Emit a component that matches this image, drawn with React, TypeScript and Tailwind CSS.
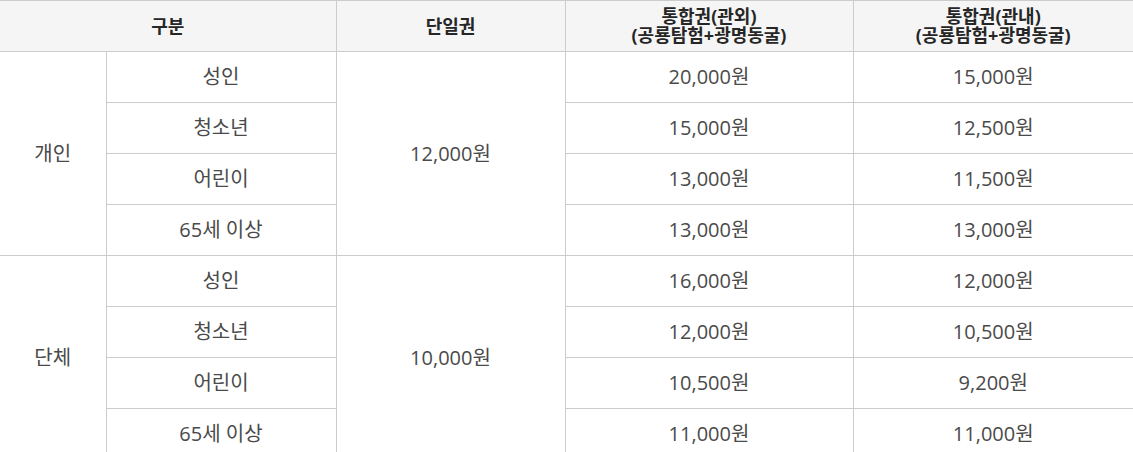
const groups = [
  {
    name: "개인",
    single: "12,000원",
    rows: [
      ["성인", "20,000원", "15,000원"],
      ["청소년", "15,000원", "12,500원"],
      ["어린이", "13,000원", "11,500원"],
      ["65세 이상", "13,000원", "13,000원"],
    ],
  },
  {
    name: "단체",
    single: "10,000원",
    rows: [
      ["성인", "16,000원", "12,000원"],
      ["청소년", "12,000원", "10,500원"],
      ["어린이", "10,500원", "9,200원"],
      ["65세 이상", "11,000원", "11,000원"],
    ],
  },
];

const cell = "border-b border-r border-[#cccccc] text-center align-middle h-[51px] p-0";

export default function App() {
  return (
    <div
      className="w-[1133px] h-[452px] overflow-hidden bg-white"
      style={{ fontFamily: '"Open Sans", "Noto Sans CJK KR", sans-serif' }}
    >
      <table className="w-[1133px] table-fixed border-collapse border-t border-[#cccccc] text-[20px] text-[#4a4a4a]">
        <colgroup>
          <col className="w-[106px]" />
          <col className="w-[230px]" />
          <col className="w-[229px]" />
          <col className="w-[288px]" />
          <col className="w-[280px]" />
        </colgroup>
        <thead>
          <tr className="bg-[#f5f5f5] text-[#262626] text-[18px] leading-[19px]">
            <th colSpan={2} className={`${cell} font-bold`}>구분</th>
            <th className={`${cell} font-bold`}>단일권</th>
            <th className={`${cell} font-bold`}>
              <div>통합권(관외)</div>
              <div>(공룡탐험+광명동굴)</div>
            </th>
            <th className={`${cell} font-bold border-r-0`}>
              <div>통합권(관내)</div>
              <div>(공룡탐험+광명동굴)</div>
            </th>
          </tr>
        </thead>
        <tbody>
          {groups.map((g) =>
            g.rows.map((r, i) => (
              <tr key={g.name + i}>
                {i === 0 && (
                  <td rowSpan={4} className={cell}>
                    {g.name}
                  </td>
                )}
                <td className={cell}>{r[0]}</td>
                {i === 0 && (
                  <td rowSpan={4} className={cell}>
                    {g.single}
                  </td>
                )}
                <td className={cell}>{r[1]}</td>
                <td className={`${cell} border-r-0`}>{r[2]}</td>
              </tr>
            ))
          )}
        </tbody>
      </table>
    </div>
  );
}
